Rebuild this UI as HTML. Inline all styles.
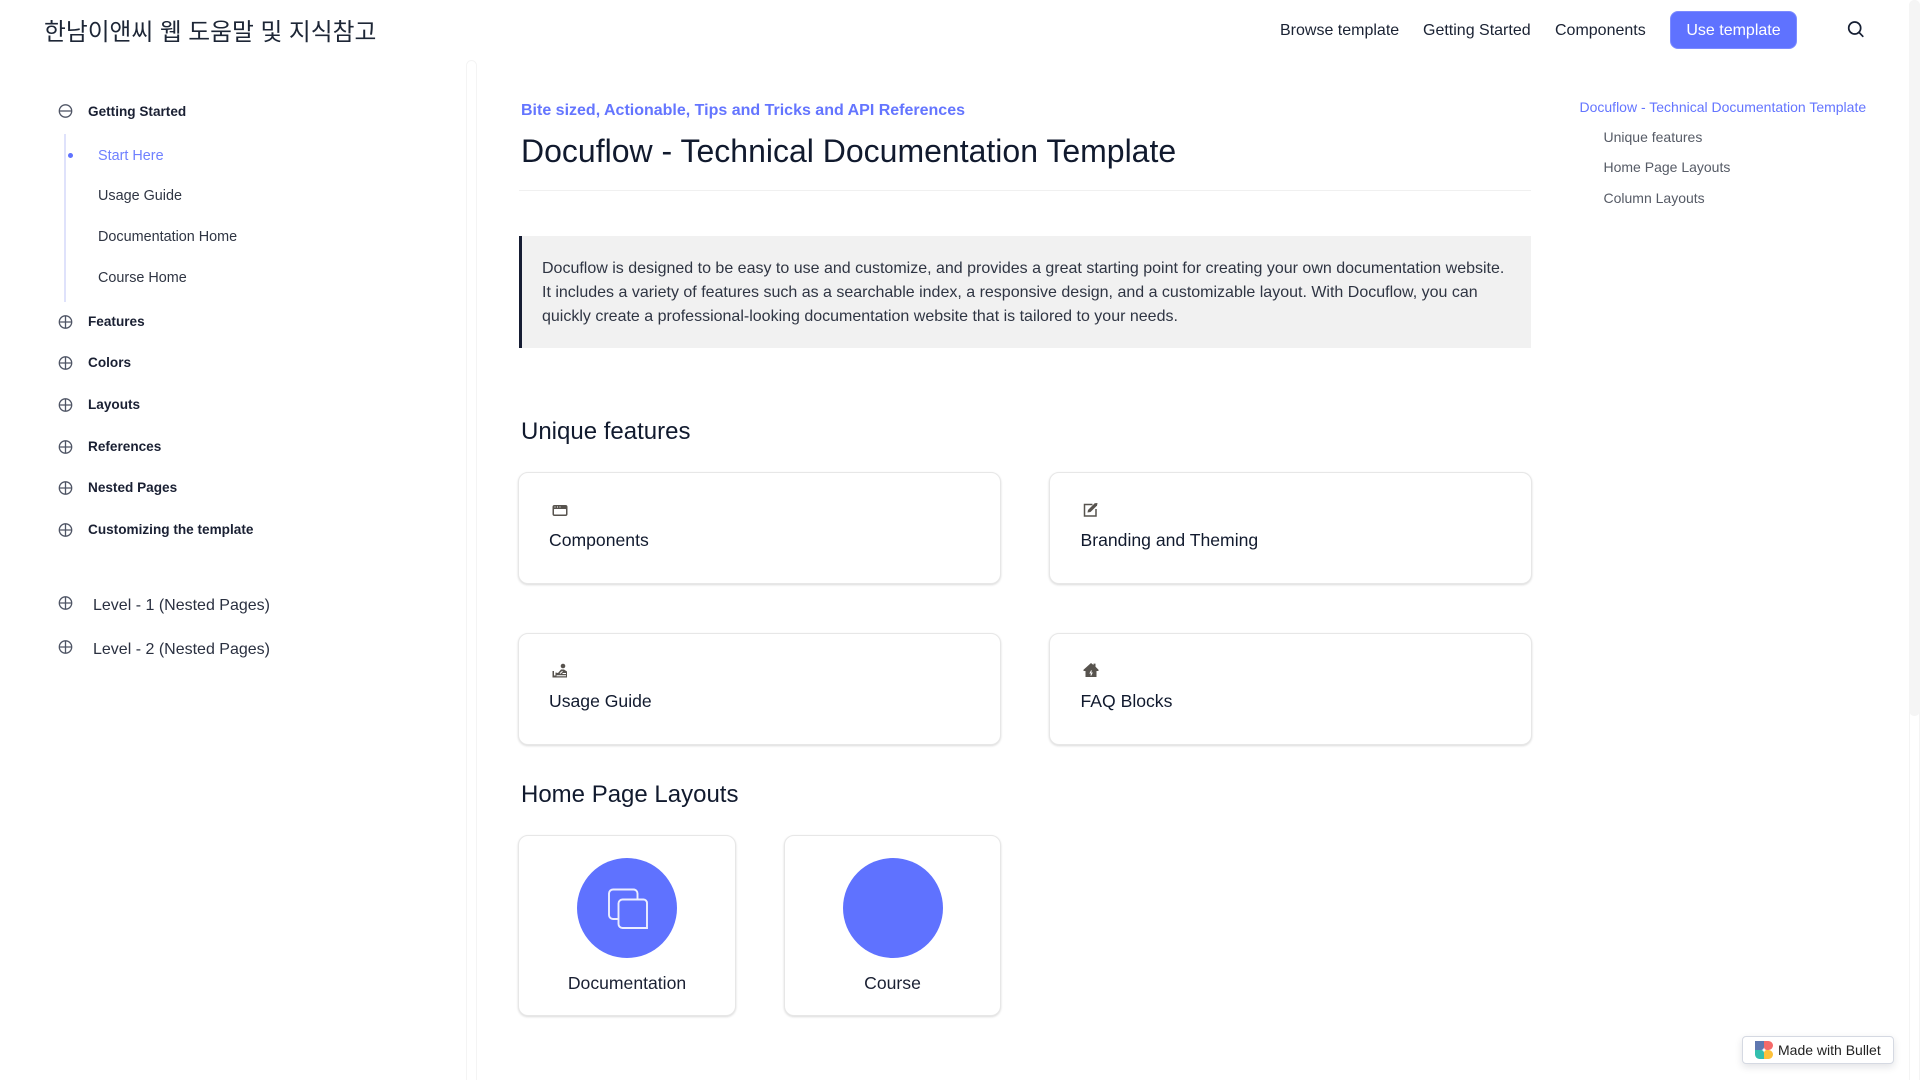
<!DOCTYPE html>
<html lang="en"><head><meta charset="utf-8"><title>Docuflow</title>
<style>
html,body{margin:0;padding:0;width:1920px;height:1080px;overflow:hidden;background:#fff}
body{font-family:"Liberation Sans","Noto Sans CJK KR",sans-serif;color:#111827;position:relative}
.t{position:absolute;white-space:nowrap;line-height:20px;margin:0;font-weight:400}
.nav{font-size:16px;color:#1a2233}
.s{font-size:13.6px;font-weight:700;color:#1a2033;left:88px}
.c{font-size:14.4px;color:#2f3543;left:98px}
.toc{font-size:14px;color:#565b66;left:1603.5px}
.card{position:absolute;box-sizing:border-box;background:#fff;border:1px solid #e7e7e7;border-radius:10px;box-shadow:0 1px 2px rgba(0,0,0,.15)}
.h{font-size:17.6px;color:#111a2e}
.ic{position:absolute;display:block}
.circ{position:absolute;width:100px;height:100px;border-radius:50%;background:#5f72ff;top:858px}
</style></head><body>

<div class="t" style="left:44px;top:17px;line-height:32px;font-size:23.75px;color:#1d2636;font-weight:400">한남이앤씨 웹 도움말 및 지식참고</div>

<div class="t nav" style="left:1280px;top:21px">Browse template</div>
<div class="t nav" style="left:1423px;top:21px">Getting Started</div>
<div class="t nav" style="left:1555px;top:21px">Components</div>
<div style="position:absolute;left:1670px;top:11px;width:127px;height:38px;box-sizing:border-box;border:1px solid #7c8bff;border-radius:8px;background:#5f72ff;color:#fff;font-size:16px;line-height:37px;text-align:center">Use template</div>
<svg class="ic" style="left:1846px;top:19px" width="20" height="20" viewBox="0 0 20 20" fill="none" stroke="#161f33" stroke-width="1.7"><circle cx="8.700" cy="9" r="6"/><path d="M13 13.300L16.800 17.300" stroke-linecap="round"/></svg>

<!-- sidebar -->
<svg class="ic" style="left:58px;top:104px" width="15" height="14" viewBox="0 0 15 14" fill="none" stroke="#4f5565" stroke-width="1.300"><circle cx="7.500" cy="7" r="6.200"/><path d="M1.500 7H13.500"/></svg>
<div class="t s" style="top:102px">Getting Started</div>
<div style="position:absolute;left:64px;top:134px;width:2px;height:168px;background:#dfe2fb"></div>
<div style="position:absolute;left:68px;top:153px;width:5px;height:5px;border-radius:50%;background:#5f72ff"></div>
<div class="t c" style="top:146px;color:#6f80ff">Start Here</div>
<div class="t c" style="top:186px">Usage Guide</div>
<div class="t c" style="top:227px">Documentation Home</div>
<div class="t c" style="top:268px">Course Home</div>

<svg width="0" height="0" style="position:absolute"><defs><g id="p" fill="none" stroke="#4f5565" stroke-width="1.300"><circle cx="7.500" cy="7" r="6.200"/><path d="M1.500 7H13.500M7.500 1V13"/></g></defs></svg>
<svg class="ic" style="left:58px;top:315px" width="15" height="14"><use href="#p"/></svg>
<div class="t s" style="top:312px">Features</div>
<svg class="ic" style="left:58px;top:356px" width="15" height="14"><use href="#p"/></svg>
<div class="t s" style="top:353px">Colors</div>
<svg class="ic" style="left:58px;top:398px" width="15" height="14"><use href="#p"/></svg>
<div class="t s" style="top:395px">Layouts</div>
<svg class="ic" style="left:58px;top:440px" width="15" height="14"><use href="#p"/></svg>
<div class="t s" style="top:437px">References</div>
<svg class="ic" style="left:58px;top:481px" width="15" height="14"><use href="#p"/></svg>
<div class="t s" style="top:478px">Nested Pages</div>
<svg class="ic" style="left:58px;top:523px" width="15" height="14"><use href="#p"/></svg>
<div class="t s" style="top:520px">Customizing the template</div>
<svg class="ic" style="left:58px;top:596px" width="15" height="14"><use href="#p"/></svg>
<div class="t" style="left:93px;top:596px;font-size:16px;color:#2a3040">Level - 1 (Nested Pages)</div>
<svg class="ic" style="left:58px;top:640px" width="15" height="14"><use href="#p"/></svg>
<div class="t" style="left:93px;top:640px;font-size:16px;color:#2a3040">Level - 2 (Nested Pages)</div>

<!-- scrollbars -->
<div style="position:absolute;left:466px;top:60px;width:11px;height:1030px;box-sizing:border-box;border:1px solid #f4f4f4;border-radius:6px"></div>
<div style="position:absolute;left:1909px;top:0;width:11px;height:1090px;box-sizing:border-box;border:1px solid #f4f4f4;border-radius:6px"></div>
<div style="position:absolute;left:1909px;top:0;width:11px;height:716px;background:#f5f5f5;border-radius:6px"></div>

<!-- main -->
<div class="t" style="left:521px;top:101px;font-size:16px;font-weight:700;color:#6475ff">Bite sized, Actionable, Tips and Tricks and API References</div>
<h1 class="t" style="left:521px;top:131px;line-height:40px;font-size:32px;color:#111a2e">Docuflow - Technical Documentation Template</h1>
<div style="position:absolute;left:519px;top:190px;width:1012px;height:1px;background:#f0f0f0"></div>

<div style="position:absolute;left:519px;top:236px;width:1012px;height:112px;box-sizing:border-box;background:#f1f1f1;border-left:3px solid #161d33"></div>
<div class="t" style="left:542px;top:257px;font-size:16px;line-height:24px;color:#2f3543">Docuflow is designed to be easy to use and customize, and provides a great starting point for creating your own documentation website.<br>It includes a variety of features such as a searchable index, a responsive design, and a customizable layout. With Docuflow, you can<br>quickly create a professional-looking documentation website that is tailored to your needs.</div>

<h2 class="t" style="left:521px;top:417px;line-height:30px;font-size:24px;color:#111a2e">Unique features</h2>

<div class="card" style="left:518px;top:472px;width:483px;height:112px"></div>
<div class="card" style="left:1049px;top:472px;width:483px;height:112px"></div>
<div class="card" style="left:518px;top:633px;width:483px;height:112px"></div>
<div class="card" style="left:1049px;top:633px;width:483px;height:112px"></div>

<svg class="ic" style="left:552px;top:504px" width="16" height="13" viewBox="0 0 16 13"><rect x="0.500" y="1" width="15" height="11" rx="2" fill="#57534e"/><rect x="2" y="5" width="12" height="5.500" rx="0.500" fill="#fff"/><path d="M2.500 2.500h1v1h-1zM5 2.500h1v1H5zM7.500 2.500h1v1h-1z" fill="#fff"/></svg>
<div class="t h" style="left:549px;top:530px">Components</div>

<svg class="ic" style="left:1083px;top:502px" width="16" height="15" viewBox="0 0 16 15"><path d="M9.500 2.500H1.500V14H13V7" fill="none" stroke="#57534e" stroke-width="1.500"/><path d="M4.500 10.500L5 8L11.700 1.200L14.500 1L14 3.600L7.500 10Z" fill="#57534e"/></svg>
<div class="t h" style="left:1080.500px;top:530px">Branding and Theming</div>

<svg class="ic" style="left:552px;top:663px" width="16" height="16" viewBox="0 0 16 16"><circle cx="11" cy="3" r="2.300" fill="#57534e"/><path d="M0.500 8V14.500H15V8.500L12 6.500H9L6 10L3.500 9.500V12.500H2V8Z" fill="#57534e"/><path d="M8 10.500L10.500 8.200M4.500 12.700H14M10.500 10.500H14" stroke="#fff" stroke-width="1"/></svg>
<div class="t h" style="left:549px;top:691px">Usage Guide</div>

<svg class="ic" style="left:1083px;top:662px" width="16" height="16" viewBox="0 0 16 16"><path d="M8 1L10.500 3V1.600H12.500V4.700L15.500 7.800V9H13.500V15H2.500V9H0.500V7.800Z" fill="#57534e"/><path d="M8.500 8.500L7.200 11H9L7.800 13.500" stroke="#fff" stroke-width="1" fill="none"/></svg>
<div class="t h" style="left:1080.500px;top:691px">FAQ Blocks</div>

<h2 class="t" style="left:521px;top:780px;line-height:30px;font-size:24px;color:#111a2e">Home Page Layouts</h2>

<div class="card" style="left:518px;top:835px;width:218px;height:181px"></div>
<div class="card" style="left:784px;top:835px;width:217px;height:181px"></div>
<div class="circ" style="left:577px"></div>
<div class="circ" style="left:843px"></div>
<svg class="ic" style="left:606px;top:887px" width="44" height="44" viewBox="0 0 44 44" fill="none" stroke="#eceeff" stroke-width="1.900"><path d="M12.500 32H7a4 4 0 0 1-4-4V6.500a4 4 0 0 1 4-4H27.500a4 4 0 0 1 4 4V12.500"/><path d="M16.500 12.500H37.500a3.500 3.500 0 0 1 3.500 3.500V41H16.500a4 4 0 0 1-4-4V16.500a4 4 0 0 1 4-4Z"/></svg>
<div class="t h" style="left:518px;width:218px;text-align:center;top:973px;color:#1a2033">Documentation</div>
<div class="t h" style="left:784px;width:217px;text-align:center;top:973px;color:#1a2033">Course</div>

<!-- toc -->
<div class="t" style="left:1579.500px;top:97px;font-size:14px;color:#6475ff">Docuflow - Technical Documentation Template</div>
<div class="t toc" style="top:127px">Unique features</div>
<div class="t toc" style="top:157px">Home Page Layouts</div>
<div class="t toc" style="top:188px">Column Layouts</div>

<!-- badge -->
<div style="position:absolute;left:1742px;top:1036px;width:152px;height:28px;box-sizing:border-box;background:#fff;border:1px solid #d5d9e2;border-radius:4px;box-shadow:0 3px 8px rgba(15,25,50,.12)"></div>
<svg class="ic" style="left:1755px;top:1041px" width="18" height="18" viewBox="0 0 18 18"><rect width="9" height="9" fill="#5f78b0"/><path d="M9 0h4.500a4.500 4.500 0 0 1 0 9H9z" fill="#f56a6a"/><path d="M0 9h9v9H4.500A4.500 4.500 0 0 1 0 13.500z" fill="#33bfae"/><path d="M9 9h4.500a4.500 4.500 0 0 1 0 9H9z" fill="#fdc13a"/><path d="M9 6.500L9.800 8.200L11.500 9L9.800 9.800L9 11.500L8.200 9.800L6.500 9L8.200 8.200Z" fill="#fff"/></svg>
<div class="t" style="left:1778px;top:1040px;font-size:14px;color:#222">Made with Bullet</div>

</body></html>
